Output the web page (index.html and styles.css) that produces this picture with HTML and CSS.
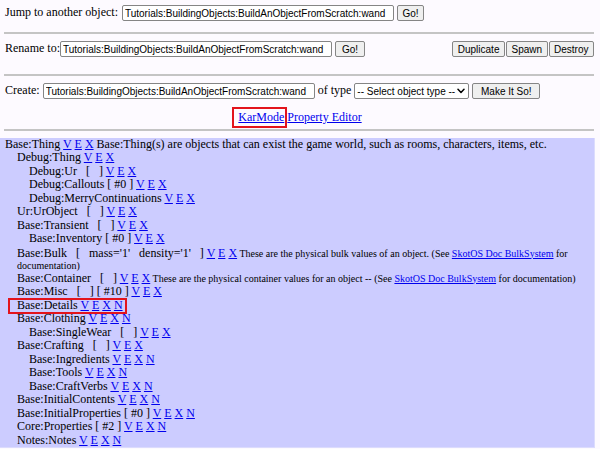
FILE: index.html
```
<!DOCTYPE html>
<html>
<head>
<meta charset="utf-8">
<title>Object Editor</title>
<link rel="stylesheet" href="styles.css">
</head>
<body>
<form class="bar r1">
  <span class="lbl">Jump to another object:</span>
  <input class="obj jump" type="text" value="Tutorials:BuildingObjects:BuildAnObjectFromScratch:wand">
  <button type="button" class="go">Go!</button>
</form>
<hr class="rule r-first">
<form class="bar r2">
  <span class="lbl">Rename to:</span>
  <input class="obj rename" type="text" value="Tutorials:BuildingObjects:BuildAnObjectFromScratch:wand">
  <button type="button" class="go go-wide">Go!</button>
  <span class="spacer"></span>
  <button type="button" class="tight">Duplicate</button>
  <button type="button" class="tight">Spawn</button>
  <button type="button" class="tight">Destroy</button>
</form>
<hr class="rule r-second">
<form class="bar r3">
  <span class="lbl">Create:</span>
  <input class="obj create" type="text" value="Tutorials:BuildingObjects:BuildAnObjectFromScratch:wand">
  <span class="lbl oftype">of type</span>
  <span class="pick">
    <select class="kind"><option>-- Select object type --</option></select>
    <svg class="chev" width="8" height="6" viewBox="0 0 8 6"><path d="M1 1.2 L4 4.4 L7 1.2" fill="none" stroke="#000" stroke-width="1.5" stroke-linecap="round" stroke-linejoin="round"/></svg>
  </span>
  <button type="button" class="make">Make It So!</button>
</form>
<div class="links"><a href="#" class="mark mark-kar">KarMode</a> <a href="#">Property Editor</a></div>
<hr class="rule r-third">
<div class="tree">
  <div class="node l0">Base:Thing <a href="#">V</a> <a href="#">E</a> <a href="#">X</a> Base:Thing(s) are objects that can exist the game world, such as rooms, characters, items, etc.</div>
  <div class="node l1">Debug:Thing <a href="#">V</a> <a href="#">E</a> <a href="#">X</a></div>
  <div class="node l2">Debug:Ur &nbsp; [ &nbsp; ] <a href="#">V</a> <a href="#">E</a> <a href="#">X</a></div>
  <div class="node l2">Debug:Callouts [ #0 ] <a href="#">V</a> <a href="#">E</a> <a href="#">X</a></div>
  <div class="node l2">Debug:MerryContinuations <a href="#">V</a> <a href="#">E</a> <a href="#">X</a></div>
  <div class="node l1">Ur:UrObject &nbsp; [ &nbsp; ] <a href="#">V</a> <a href="#">E</a> <a href="#">X</a></div>
  <div class="node l1">Base:Transient &nbsp; [ &nbsp; ] <a href="#">V</a> <a href="#">E</a> <a href="#">X</a></div>
  <div class="node l2">Base:Inventory [ #0 ] <a href="#">V</a> <a href="#">E</a> <a href="#">X</a></div>
  <div class="node l1 noted bulk"><span class="main">Base:Bulk &nbsp; [ &nbsp; mass='1' &nbsp; density='1' &nbsp; ] <a href="#">V</a> <a href="#">E</a> <a href="#">X</a></span> <small class="note">These are the physical bulk values of an object. (See <a href="#">SkotOS Doc BulkSystem</a> for documentation)</small></div>
  <div class="node l1 noted"><span class="main">Base:Container &nbsp; [ &nbsp; ] <a href="#">V</a> <a href="#">E</a> <a href="#">X</a></span> <small class="note">These are the physical container values for an object -- (See <a href="#">SkotOS Doc BulkSystem</a> for documentation)</small></div>
  <div class="node l1">Base:Misc &nbsp; [ &nbsp; ] [ #10 ] <a href="#">V</a> <a href="#">E</a> <a href="#">X</a></div>
  <div class="node l1"><span class="mark mark-det">Base:Details <a href="#">V</a> <a href="#">E</a> <a href="#">X</a> <a href="#">N</a></span></div>
  <div class="node l1">Base:Clothing <a href="#">V</a> <a href="#">E</a> <a href="#">X</a> <a href="#">N</a></div>
  <div class="node l2">Base:SingleWear &nbsp; [ &nbsp; ] <a href="#">V</a> <a href="#">E</a> <a href="#">X</a></div>
  <div class="node l1">Base:Crafting &nbsp; [ &nbsp; ] <a href="#">V</a> <a href="#">E</a> <a href="#">X</a></div>
  <div class="node l2">Base:Ingredients <a href="#">V</a> <a href="#">E</a> <a href="#">X</a> <a href="#">N</a></div>
  <div class="node l2">Base:Tools <a href="#">V</a> <a href="#">E</a> <a href="#">X</a> <a href="#">N</a></div>
  <div class="node l2">Base:CraftVerbs <a href="#">V</a> <a href="#">E</a> <a href="#">X</a> <a href="#">N</a></div>
  <div class="node l1">Base:InitialContents <a href="#">V</a> <a href="#">E</a> <a href="#">X</a> <a href="#">N</a></div>
  <div class="node l1">Base:InitialProperties [ #0 ] <a href="#">V</a> <a href="#">E</a> <a href="#">X</a> <a href="#">N</a></div>
  <div class="node l1">Core:Properties [ #2 ] <a href="#">V</a> <a href="#">E</a> <a href="#">X</a> <a href="#">N</a></div>
  <div class="node l1">Notes:Notes <a href="#">V</a> <a href="#">E</a> <a href="#">X</a> <a href="#">N</a></div>
</div>
</body>
</html>
```
FILE: styles.css
```
html {
  overflow: hidden;
  background: #fdfaff;
}
body {
  margin: 0;
  padding-top: 5px;
  background: #fdfaff;
  color: #000;
  font-family: "Liberation Serif", "Times New Roman", serif;
  font-size: 12px;
  line-height: 13.5px;
}
a {
  color: #0000ee;
  text-decoration: underline;
}
.bar {
  display: flex;
  align-items: center;
  height: 16px;
  margin: 0;
  padding: 0 6px 0 5px;
}
.lbl {
  white-space: nowrap;
}
input,
button,
select {
  box-sizing: border-box;
  height: 16px;
  margin: 0;
  font-family: "Liberation Sans", Arial, sans-serif;
  font-size: 10px;
  color: #000;
}
.obj {
  width: 272px;
  padding: 0 2px;
  border: 1px solid #858585;
  border-radius: 2px;
  background: #fff;
}
.jump { margin-left: 4px; }
.rename { margin-left: 0; width: 272px; }
.create { margin-left: 3px; }
button {
  padding: 0 4.5px;
  border: 1px solid #858585;
  border-radius: 2px;
  background: #efefef;
  white-space: nowrap;
}
.go { margin-left: 3px; }
.go-wide { margin-left: 3px; padding: 0 6px; }
.spacer { flex: 1; }
.tight { margin-left: 1px; }
.oftype { margin: 0 3px; }
.pick {
  position: relative;
  display: inline-flex;
}
.kind {
  width: 115px;
  padding: 0 12px 0 2px;
  border: 1px solid #858585;
  border-radius: 2px;
  background: #fff;
  -webkit-appearance: none;
  appearance: none;
}
.chev {
  position: absolute;
  right: 4px;
  top: 5px;
  pointer-events: none;
}
.make {
  margin-left: 3px;
  width: 68px;
}
.rule {
  height: 0;
  margin: 0 6px 0 4px;
  border: 0;
  border-top: 2px solid #c4c4c4;
}
.r-first { margin-top: 11px; margin-bottom: 7px; }
.r-second { margin-top: 17px; margin-bottom: 7px; }
.r-third { margin-top: 4px; }
.links {
  margin-top: 12px;
  text-align: center;
  padding: 0 6px;
}
.mark {
  position: relative;
  display: inline-block;
}
.mark::after {
  content: "";
  position: absolute;
  border: 2px solid #e3141c;
  pointer-events: none;
}
.mark-kar::after {
  top: -4px;
  bottom: -3px;
  left: -6px;
  right: -3px;
}
.mark-det::after {
  top: -1px;
  bottom: -2px;
  left: -9px;
  right: -4px;
}
.tree {
  margin: 7px 5px 0 0;
  padding-left: 5px;
  background: #ccccff;
  border-right: 1px solid #dcdcfd;
  border-bottom: 1px solid #dcdcfd;
}
.node {
  line-height: 13.5px;
}
.l1 { padding-left: 12px; }
.l2 { padding-left: 24px; }
.noted {
  font-size: 10px;
  line-height: 11.5px;
}
.bulk {
  padding-top: 1px;
}
.noted .main {
  font-size: 12px;
  line-height: 13.5px;
}
.note {
  font-size: 10px;
}
```
